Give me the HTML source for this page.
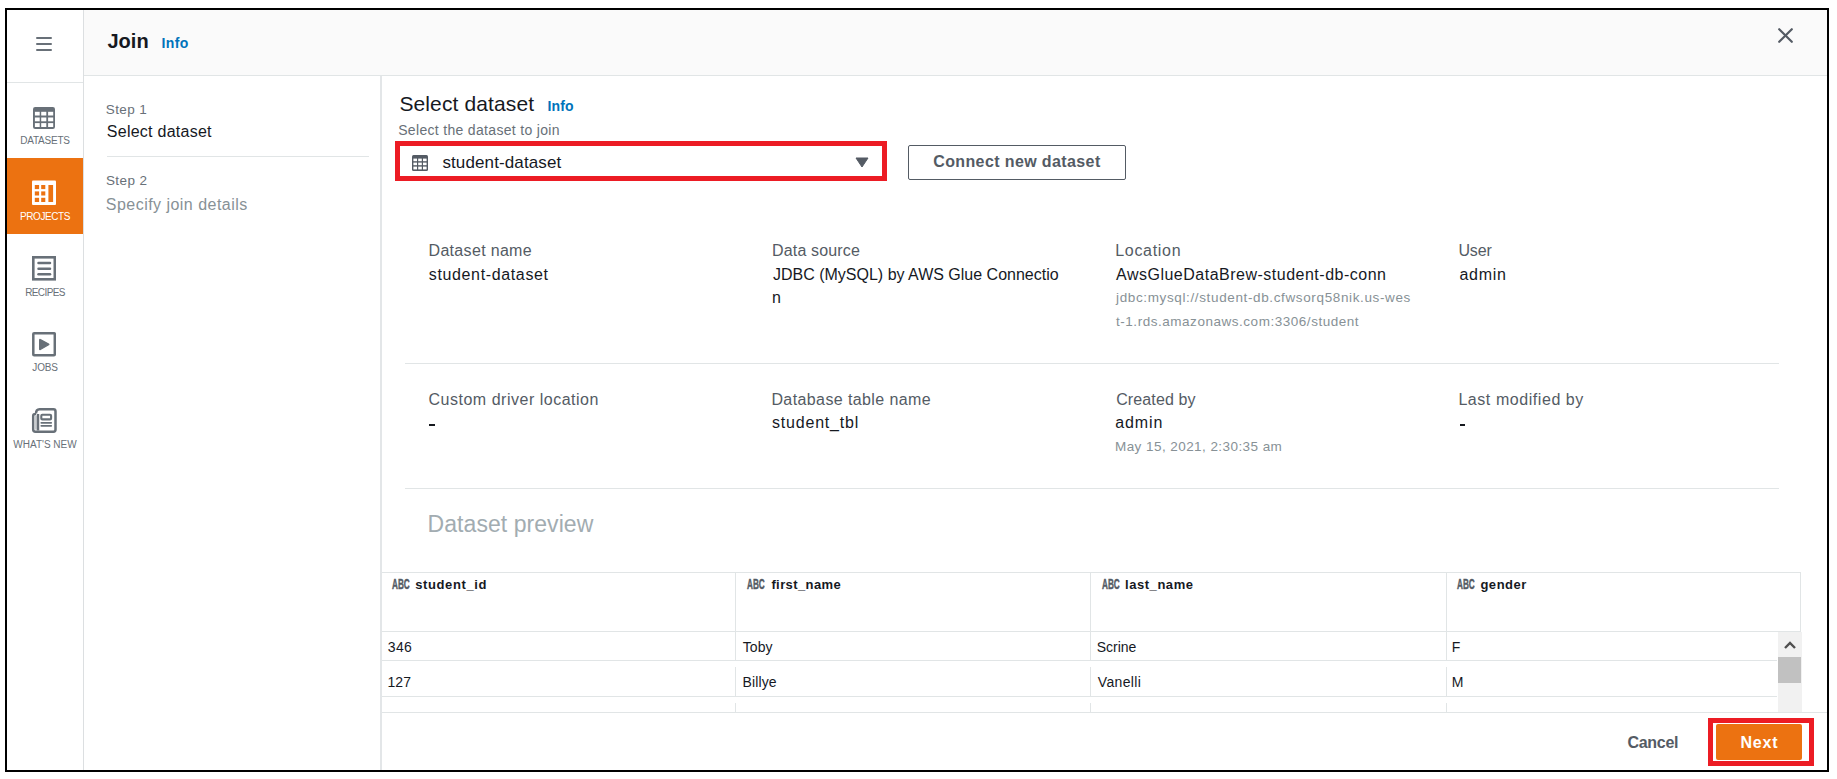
<!DOCTYPE html>
<html><head><meta charset="utf-8">
<style>
*{margin:0;padding:0;box-sizing:border-box}
html,body{width:1837px;height:779px;overflow:hidden;background:#fff;font-family:"Liberation Sans",sans-serif;color:#16191f;position:relative}
.a{position:absolute;white-space:nowrap;line-height:1}
.box{position:absolute}
.hl{position:absolute;height:1px;background:#e1e5e6}
.vl{position:absolute;width:1px;background:#e1e5e6}
.nav{position:absolute;left:7px;width:76px;text-align:center;color:#687078;font-size:10px;letter-spacing:-0.2px;line-height:1}
.abc{position:absolute;font-family:"Liberation Sans",sans-serif;font-size:15px;font-weight:700;color:#545b64;-webkit-text-stroke:0.5px #545b64;transform:scaleX(0.545);transform-origin:left top;line-height:1}

</style></head>
<body>
<!-- header bg -->
<div class="box" style="left:84px;top:10px;width:1743px;height:65px;background:#fafafa"></div>
<div class="hl" style="left:84px;top:75px;width:1743px"></div>
<!-- left nav -->
<div class="vl" style="left:83px;top:10px;height:760px;background:#dcdfe1"></div>
<div class="hl" style="left:7px;top:82px;width:76px"></div>
<!-- hamburger -->
<div class="box" style="left:36px;top:36.6px;width:16.4px;height:2.5px;border-radius:1px;background:#687078"></div>
<div class="box" style="left:36px;top:42.6px;width:16.4px;height:2.5px;border-radius:1px;background:#687078"></div>
<div class="box" style="left:36px;top:48.6px;width:16.4px;height:2.5px;border-radius:1px;background:#687078"></div>
<!-- orange projects -->
<div class="box" style="left:7px;top:158px;width:76px;height:76px;background:#ec7211"></div>
<!-- steps column line -->
<div class="vl" style="left:380px;top:76px;height:694px;width:2px;background:#e3e6e8"></div>

<!-- nav icons -->
<svg class="box" style="left:33px;top:107px" width="22" height="22" viewBox="0 0 22 22">
<rect x="0" y="0" width="22" height="22" rx="2.2" fill="#687078"/>
<g fill="#fff">
<rect x="1.9" y="4.8" width="4.8" height="3.7"/><rect x="8.2" y="4.8" width="5.1" height="3.7"/><rect x="15.1" y="4.8" width="5.1" height="3.7"/>
<rect x="1.9" y="10.5" width="4.8" height="3.8"/><rect x="8.2" y="10.5" width="5.1" height="3.8"/><rect x="15.1" y="10.5" width="5.1" height="3.8"/>
<rect x="1.9" y="16.1" width="4.8" height="3.9"/><rect x="8.2" y="16.1" width="5.1" height="3.9"/><rect x="15.1" y="16.1" width="5.1" height="3.9"/>
</g></svg>
<div class="nav" style="top:136px">DATASETS</div>

<svg class="box" style="left:32px;top:180px" width="24" height="25" viewBox="0 0 24 25">
<rect x="0" y="0.5" width="24" height="24.5" rx="1" fill="#fff"/>
<g fill="#ec7211">
<rect x="2.8" y="5" width="4.3" height="4.1"/><rect x="9.2" y="5" width="4.1" height="4.1"/>
<rect x="2.8" y="11.4" width="4.3" height="4.1"/><rect x="9.2" y="11.4" width="4.1" height="4.1"/>
<rect x="2.8" y="17.8" width="4.3" height="4.2"/><rect x="9.2" y="17.8" width="4.1" height="4.2"/>
<rect x="16.4" y="5" width="4.7" height="17"/>
</g></svg>
<div class="nav" style="top:212px;color:#fff;letter-spacing:-0.4px">PROJECTS</div>

<svg class="box" style="left:32px;top:256px" width="24" height="25" viewBox="0 0 24 25">
<rect x="1.3" y="1.3" width="21.5" height="22" fill="none" stroke="#687078" stroke-width="2.6"/>
<g stroke="#687078" stroke-width="2.5" stroke-linecap="round">
<line x1="6.5" y1="7.1" x2="18" y2="7.1"/><line x1="6.5" y1="12.7" x2="18" y2="12.7"/><line x1="6.5" y1="18.3" x2="18" y2="18.3"/>
</g></svg>
<div class="nav" style="top:288px;letter-spacing:-0.6px">RECIPES</div>

<svg class="box" style="left:32px;top:332px" width="24" height="25" viewBox="0 0 24 25">
<rect x="1.3" y="1.3" width="21.5" height="22" rx="0.8" fill="none" stroke="#687078" stroke-width="2.5"/>
<path d="M8.3 7.6 Q7.6 7.2 7.6 8 L7.6 17 Q7.6 17.8 8.3 17.4 L16.6 12.8 Q17.2 12.5 16.6 12.1 Z" fill="#687078" stroke="#687078" stroke-width="1.2" stroke-linejoin="round"/>
</svg>
<div class="nav" style="top:363px">JOBS</div>

<svg class="box" style="left:31px;top:407px" width="26" height="27" viewBox="0 0 26 27">
<path d="M5 6.5 Q5 2.3 8.5 2.3 L22.5 2.3 Q24.5 2.3 24.5 4.5 L24.5 22.5 Q24.5 24.7 22.5 24.7 L4.5 24.7 Q2.2 24.7 2.2 22.5 L2.2 9 Q2.2 7 4.5 7 L5 7" fill="none" stroke="#687078" stroke-width="2.5" stroke-linejoin="round"/>
<rect x="3.4" y="8.6" width="2.4" height="14" fill="#c9cdd0"/>
<line x1="7" y1="7" x2="7" y2="23.5" stroke="#687078" stroke-width="2.5"/>
<rect x="10.3" y="7.8" width="9.8" height="4.6" rx="1" fill="none" stroke="#687078" stroke-width="2.1"/>
<g stroke="#687078" stroke-width="1.8" stroke-linecap="round"><line x1="10.3" y1="15.8" x2="20.2" y2="15.8"/><line x1="10.3" y1="18.8" x2="20.2" y2="18.8"/></g>
</svg>
<div class="nav" style="top:440px;letter-spacing:0px">WHAT'S NEW</div>

<!-- close X -->
<svg class="box" style="left:1776px;top:26px" width="19" height="19" viewBox="0 0 19 19">
<g stroke="#545b64" stroke-width="2.2" stroke-linecap="round"><line x1="3.2" y1="3.2" x2="15.8" y2="15.8"/><line x1="15.8" y1="3.2" x2="3.2" y2="15.8"/></g></svg>

<!-- steps divider -->
<div class="hl" style="left:107px;top:156px;width:262px"></div>

<!-- select -->
<div class="box" style="left:395px;top:141px;width:492px;height:40px;border:5px solid #ec1c24"></div>
<svg class="box" style="left:412px;top:155px" width="16" height="16" viewBox="0 0 16 16">
<rect x="0" y="0" width="16" height="16" rx="1.5" fill="#545b64"/>
<g fill="#fff">
<rect x="1.4" y="3.6" width="3.6" height="2.6"/><rect x="6.2" y="3.6" width="3.6" height="2.6"/><rect x="11" y="3.6" width="3.6" height="2.6"/>
<rect x="1.4" y="7.6" width="3.6" height="2.6"/><rect x="6.2" y="7.6" width="3.6" height="2.6"/><rect x="11" y="7.6" width="3.6" height="2.6"/>
<rect x="1.4" y="11.6" width="3.6" height="2.8"/><rect x="6.2" y="11.6" width="3.6" height="2.8"/><rect x="11" y="11.6" width="3.6" height="2.8"/>
</g></svg>
<svg class="box" style="left:855px;top:157px" width="14" height="11" viewBox="0 0 14 11">
<path d="M1 1 L13 1 L7 10 Z" fill="#545b64" stroke="#545b64" stroke-width="1" stroke-linejoin="round"/></svg>
<div class="box" style="left:908px;top:145px;width:218px;height:35px;border:1px solid #545b64;border-radius:2px"></div>

<!-- dividers -->
<div class="hl" style="left:405px;top:363px;width:1374px"></div>
<div class="hl" style="left:405px;top:488px;width:1374px"></div>

<!-- table -->
<div class="hl" style="left:382px;top:572px;width:1419px"></div>
<div class="hl" style="left:382px;top:631px;width:1419px"></div>
<div class="vl" style="left:1800px;top:572px;height:60px"></div>
<div class="hl" style="left:382px;top:660px;width:1395px"></div>
<div class="hl" style="left:382px;top:696px;width:1395px"></div>
<div class="hl" style="left:382px;top:712px;width:1445px"></div>
<div class="vl" style="left:735px;top:572px;height:89px"></div>
<div class="vl" style="left:735px;top:667px;height:30px"></div>
<div class="vl" style="left:735px;top:703px;height:9px"></div>
<div class="vl" style="left:1090px;top:572px;height:89px"></div>
<div class="vl" style="left:1090px;top:667px;height:30px"></div>
<div class="vl" style="left:1090px;top:703px;height:9px"></div>
<div class="vl" style="left:1446px;top:572px;height:89px"></div>
<div class="vl" style="left:1446px;top:667px;height:30px"></div>
<div class="vl" style="left:1446px;top:703px;height:9px"></div>

<div class="abc" style="left:391.8px;top:575.5px">ABC</div>
<div class="abc" style="left:746.7px;top:575.5px">ABC</div>
<div class="abc" style="left:1102.0px;top:575.5px">ABC</div>
<div class="abc" style="left:1457.0px;top:575.5px">ABC</div>

<!-- scrollbar -->
<div class="box" style="left:1778px;top:632px;width:24px;height:80px;background:#f1f1f1"></div>
<div class="box" style="left:1778px;top:657px;width:23px;height:26px;background:#c1c1c1"></div>
<svg class="box" style="left:1783px;top:640px" width="14" height="10" viewBox="0 0 14 10">
<path d="M2 8 L7 3 L12 8" fill="none" stroke="#505050" stroke-width="2.4"/></svg>

<!-- footer -->
<div class="box" style="left:1708px;top:717.6px;width:106px;height:48.2px;border:5px solid #ec1c24"></div>
<div class="box" style="left:1716px;top:724px;width:86.4px;height:36px;background:#ec7211;border-radius:2px"></div>
<div class="a" id="join" style="left:107.40px;top:31.31px;font-size:20px;font-weight:700;color:#16191f;letter-spacing:0.033px">Join</div>
<div class="a" id="info1" style="left:161.40px;top:36.32px;font-size:14px;font-weight:700;color:#0073bb;letter-spacing:0.400px">Info</div>
<div class="a" id="step1" style="left:105.80px;top:102.70px;font-size:13.5px;font-weight:400;color:#687078;letter-spacing:0.380px">Step 1</div>
<div class="a" id="sel" style="left:106.80px;top:123.72px;font-size:16px;font-weight:400;color:#16191f;letter-spacing:0.254px">Select dataset</div>
<div class="a" id="step2" style="left:105.90px;top:174.41px;font-size:13.5px;font-weight:400;color:#687078;letter-spacing:0.410px">Step 2</div>
<div class="a" id="spec" style="left:105.80px;top:197.01px;font-size:16px;font-weight:400;color:#879196;letter-spacing:0.468px">Specify join details</div>
<div class="a" id="h" style="left:399.40px;top:92.91px;font-size:21px;font-weight:400;color:#16191f;letter-spacing:0.123px">Select dataset</div>
<div class="a" id="info2" style="left:547.60px;top:98.90px;font-size:14px;font-weight:700;color:#0073bb;letter-spacing:0.100px">Info</div>
<div class="a" id="desc" style="left:398.20px;top:122.81px;font-size:14px;font-weight:400;color:#687078;letter-spacing:0.320px">Select the dataset to join</div>
<div class="a" id="selval" style="left:442.40px;top:153.90px;font-size:17px;font-weight:400;color:#16191f;letter-spacing:0.121px">student-dataset</div>
<div class="a" id="connect" style="left:933.20px;top:154.41px;font-size:16px;font-weight:700;color:#545b64;letter-spacing:0.389px">Connect new dataset</div>
<div class="a" id="l1" style="left:428.50px;top:243.22px;font-size:16px;font-weight:400;color:#545b64;letter-spacing:0.323px">Dataset name</div>
<div class="a" id="v1" style="left:428.80px;top:266.81px;font-size:16px;font-weight:400;color:#16191f;letter-spacing:0.636px">student-dataset</div>
<div class="a" id="l2" style="left:772.00px;top:243.21px;font-size:16px;font-weight:400;color:#545b64;letter-spacing:0.160px">Data source</div>
<div class="a" id="v2" style="left:773.00px;top:266.82px;font-size:16px;font-weight:400;color:#16191f;letter-spacing:-0.003px">JDBC (MySQL) by AWS Glue Connectio</div>
<div class="a" id="v2b" style="left:772.00px;top:290.30px;font-size:16px;font-weight:400;color:#16191f;letter-spacing:0.000px">n</div>
<div class="a" id="l3" style="left:1115.20px;top:243.21px;font-size:16px;font-weight:400;color:#545b64;letter-spacing:0.700px">Location</div>
<div class="a" id="v3" style="left:1116.00px;top:266.82px;font-size:16px;font-weight:400;color:#16191f;letter-spacing:0.500px">AwsGlueDataBrew-student-db-conn</div>
<div class="a" id="s3a" style="left:1116.00px;top:291.01px;font-size:13.5px;font-weight:400;color:#879196;letter-spacing:0.631px">jdbc:mysql://student-db.cfwsorq58nik.us-wes</div>
<div class="a" id="s3b" style="left:1116.00px;top:314.60px;font-size:13.5px;font-weight:400;color:#879196;letter-spacing:0.530px">t-1.rds.amazonaws.com:3306/student</div>
<div class="a" id="l4" style="left:1458.40px;top:243.22px;font-size:16px;font-weight:400;color:#545b64;letter-spacing:-0.100px">User</div>
<div class="a" id="v4" style="left:1459.50px;top:266.81px;font-size:16px;font-weight:400;color:#16191f;letter-spacing:0.713px">admin</div>
<div class="a" id="l5" style="left:428.50px;top:392.00px;font-size:16px;font-weight:400;color:#545b64;letter-spacing:0.512px">Custom driver location</div>
<div class="box" style="left:429.1px;top:423.6px;width:5.6px;height:2px;background:#16191f"></div>
<div class="a" id="l6" style="left:771.40px;top:392.00px;font-size:16px;font-weight:400;color:#545b64;letter-spacing:0.400px">Database table name</div>
<div class="a" id="v6" style="left:772.00px;top:415.41px;font-size:16px;font-weight:400;color:#16191f;letter-spacing:0.800px">student_tbl</div>
<div class="a" id="l7" style="left:1116.20px;top:392.00px;font-size:16px;font-weight:400;color:#545b64;letter-spacing:0.122px">Created by</div>
<div class="a" id="v7" style="left:1115.20px;top:415.41px;font-size:16px;font-weight:400;color:#16191f;letter-spacing:0.900px">admin</div>
<div class="a" id="s7" style="left:1115.00px;top:439.60px;font-size:13.5px;font-weight:400;color:#879196;letter-spacing:0.435px">May 15, 2021, 2:30:35 am</div>
<div class="a" id="l8" style="left:1458.40px;top:392.00px;font-size:16px;font-weight:400;color:#545b64;letter-spacing:0.560px">Last modified by</div>
<div class="box" style="left:1459.8px;top:423.6px;width:5.6px;height:2px;background:#16191f"></div>
<div class="a" id="prev" style="left:427.60px;top:513.01px;font-size:23px;font-weight:300;color:#a2acb1;letter-spacing:0.057px">Dataset preview</div>
<div class="a" id="th1" style="left:415.20px;top:578.01px;font-size:13px;font-weight:700;color:#16191f;letter-spacing:0.622px">student_id</div>
<div class="a" id="th2" style="left:771.40px;top:578.41px;font-size:13px;font-weight:700;color:#16191f;letter-spacing:0.400px">first_name</div>
<div class="a" id="th3" style="left:1125.00px;top:578.41px;font-size:13px;font-weight:700;color:#16191f;letter-spacing:0.550px">last_name</div>
<div class="a" id="th4" style="left:1480.40px;top:578.41px;font-size:13px;font-weight:700;color:#16191f;letter-spacing:0.540px">gender</div>
<div class="a" id="r11" style="left:387.80px;top:639.60px;font-size:14px;font-weight:400;color:#16191f;letter-spacing:0.350px">346</div>
<div class="a" id="r12" style="left:742.80px;top:639.60px;font-size:14px;font-weight:400;color:#16191f;letter-spacing:0.067px">Toby</div>
<div class="a" id="r13" style="left:1096.80px;top:639.81px;font-size:14px;font-weight:400;color:#16191f;letter-spacing:-0.040px">Scrine</div>
<div class="a" id="r14" style="left:1451.80px;top:639.81px;font-size:14px;font-weight:400;color:#16191f;letter-spacing:0.000px">F</div>
<div class="a" id="r21" style="left:387.40px;top:675.01px;font-size:14px;font-weight:400;color:#16191f;letter-spacing:0.150px">127</div>
<div class="a" id="r22" style="left:742.60px;top:675.01px;font-size:14px;font-weight:400;color:#16191f;letter-spacing:0.100px">Billye</div>
<div class="a" id="r23" style="left:1097.80px;top:675.01px;font-size:14px;font-weight:400;color:#16191f;letter-spacing:0.350px">Vanelli</div>
<div class="a" id="r24" style="left:1451.80px;top:675.01px;font-size:14px;font-weight:400;color:#16191f;letter-spacing:0.000px">M</div>
<div class="a" id="cancel" style="left:1627.40px;top:734.60px;font-size:16px;font-weight:700;color:#545b64;letter-spacing:-0.280px">Cancel</div>
<div class="a" id="next" style="left:1740.40px;top:734.60px;font-size:16px;font-weight:700;color:#ffffff;letter-spacing:0.800px">Next</div>

<!-- outer frame -->
<div class="box" style="left:5px;top:8px;width:1824px;height:764px;border:2px solid #000"></div>
</body></html>
